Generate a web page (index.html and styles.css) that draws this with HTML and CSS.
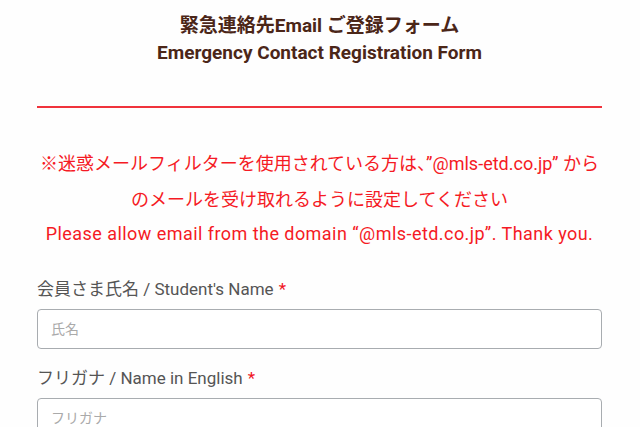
FILE: index.html
```html
<!DOCTYPE html>
<html lang="ja">
<head>
<meta charset="utf-8">
<link rel="stylesheet" href="styles.css">
</head>
<body>
<div class="page">
  <header class="head">
    <h1 class="title">緊急連絡先Email ご登録フォーム<br>Emergency Contact Registration Form</h1>
  </header>
  <hr class="rule">
  <div class="notice">
    <p>※迷惑メールフィルターを使用されている方は、”@mls-etd.co.jp” から<br>のメールを受け取れるように設定してください</p>
    <p class="en">Please allow email from the domain “@mls-etd.co.jp”. Thank you.</p>
  </div>
  <form class="form">
    <div class="field">
      <label class="label">会員さま氏名 / Student's Name<span class="req">*</span></label>
      <input class="input" type="text" placeholder="氏名">
    </div>
    <div class="field">
      <label class="label">フリガナ / Name in English<span class="req">*</span></label>
      <input class="input" type="text" placeholder="フリガナ">
    </div>
  </form>
</div>
</body>
</html>
```

FILE: styles.css
```css
html, body {
  margin: 0;
  padding: 0;
  background: #fefefe;
  overflow: hidden;
}
body {
  font-family: Roboto, "Noto Sans CJK JP", sans-serif;
}
.page {
  padding: 0 38px 0 37px;
}
.head {
  padding-top: 12px;
}
.title {
  margin: 0;
  text-align: center;
  font-size: 19px;
  line-height: 27px;
  font-weight: 700;
  color: #4b2618;
}
.rule {
  margin: 40px 0 0;
  border: 0;
  height: 2px;
  background: #f0333c;
}
.notice {
  margin-top: 38px;
  text-align: center;
  color: #f51a24;
  font-size: 18px;
  line-height: 36px;
}
.notice p {
  margin: 0;
}
.notice .en {
  margin-top: -2px;
  letter-spacing: 0.45px;
}
.form {
  margin-top: 25px;
}
.field {
  display: flex;
  flex-direction: column;
  margin-bottom: 17px;
}
.label {
  font-size: 17px;
  line-height: 24px;
  color: #555;
  margin-bottom: 8px;
}
.req {
  color: #f0141e;
  margin-left: 5px;
}
.input {
  box-sizing: border-box;
  height: 40px;
  border: 1px solid #a8acb0;
  border-radius: 4px;
  padding: 0 13px;
  font-family: Roboto, "Noto Sans CJK JP", sans-serif;
  font-size: 14px;
  background: #fff;
}
.input::placeholder {
  color: #aaa;
}
```
